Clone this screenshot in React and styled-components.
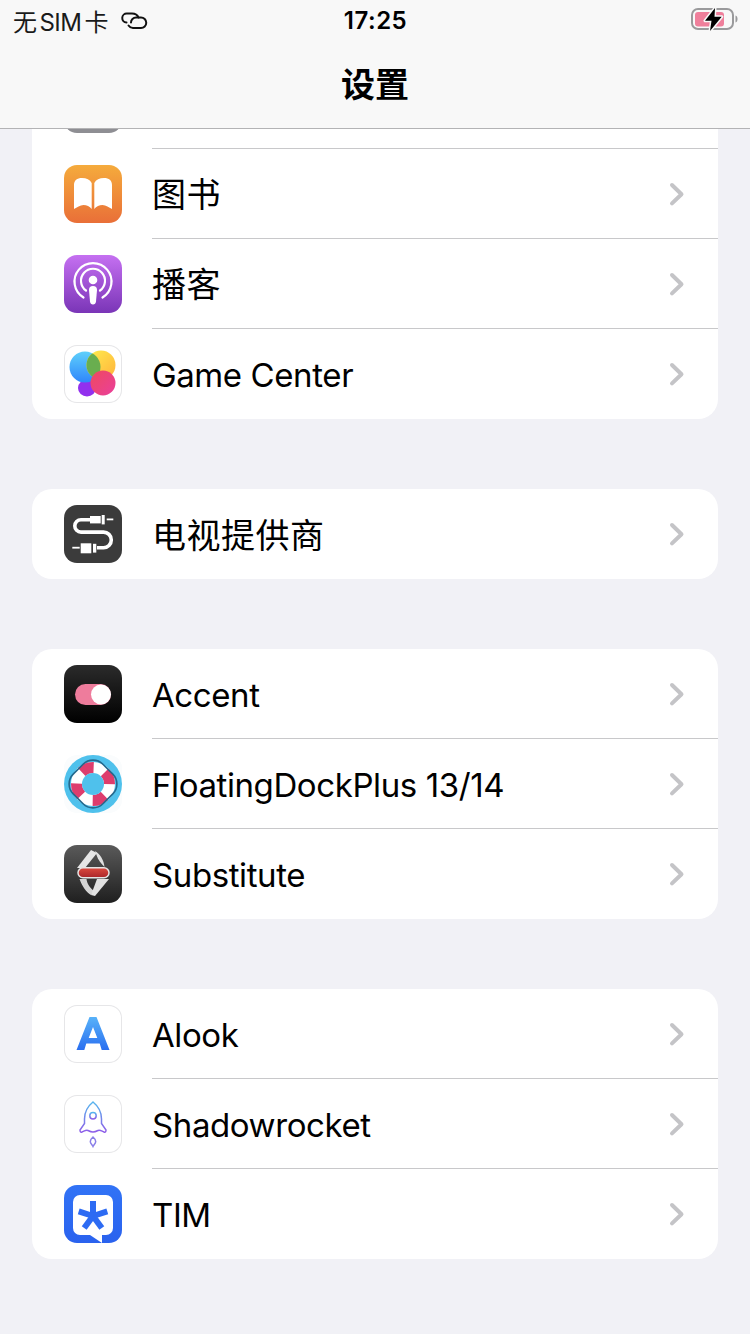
import React from "react";
import styled, { createGlobalStyle } from "styled-components";

const GlobalStyle = createGlobalStyle`
  html, body {
    margin: 0;
    padding: 0;
    background: #f1f1f6;
  }
  body {
    font-family: Inter, "Noto Sans CJK SC", sans-serif;
    color: #000;
  }
`;

const Page = styled.div`
  position: relative;
  width: 750px;
  height: 1334px;
  overflow: hidden;
  padding-top: 59px;
  box-sizing: border-box;
  background: #f1f1f6;
`;

const NavBar = styled.header`
  position: absolute;
  top: 0;
  left: 0;
  right: 0;
  z-index: 2;
  height: 128px;
  background: #f8f8f8;
  border-bottom: 1px solid #b3b3b5;
`;

const StatusBar = styled.div`
  display: flex;
  align-items: center;
  justify-content: space-between;
  height: 40px;
  padding: 0 11px 0 13px;
`;

const Carrier = styled.div`
  display: flex;
  align-items: center;
  gap: 12px;
  width: 200px;
  font-size: 24px;
  letter-spacing: -0.6px;
  word-spacing: -3px;
  color: #1a1a1a;
`;

const Clock = styled.div`
  font-size: 24px;
  font-weight: 600;
  letter-spacing: 0.5px;
  margin-left: -1px;
`;

const Battery = styled.div`
  display: flex;
  justify-content: flex-end;
  width: 200px;
`;

const Title = styled.h1`
  margin: 0;
  padding-top: 1px;
  text-align: center;
  font-size: 34px;
  line-height: 84px;
  height: 84px;
  font-weight: 700;
  font-family: "Noto Sans CJK SC", sans-serif;
`;

const Group = styled.section`
  margin: 0 32px 70px;
  background: #fff;
  border-radius: 20px;
  overflow: hidden;
`;

const Row = styled.div`
  display: flex;
  align-items: center;
  height: 90px;
  padding-left: 32px;
`;

const Tile = styled.div`
  flex: none;
  width: 58px;
  height: 58px;
  margin-right: 30px;
  border-radius: 13px;
  overflow: hidden;
  background: ${(p) => p.$bg || "transparent"};
  box-shadow: ${(p) => (p.$outlined ? "inset 0 0 0 1px #e6e6e8" : "none")};
  svg {
    display: block;
  }
`;

const RowBody = styled.div`
  flex: 1;
  align-self: stretch;
  display: flex;
  align-items: center;
  justify-content: space-between;
  padding-right: 32px;
  border-bottom: ${(p) => (p.$last ? "none" : "1px solid #c8c8ca")};
`;

const Label = styled.span`
  font-size: ${(p) => (p.$cjk ? "34px" : "33px")};
  letter-spacing: ${(p) => (p.$cjk ? "0.5px" : "-0.4px")};
  padding-top: ${(p) => (p.$cjk ? "0" : "2px")};
  padding-bottom: ${(p) => (p.$cjk ? "2px" : "0")};
  font-family: Inter, "Noto Sans CJK SC", sans-serif;
`;

const Art = ({ children }) => (
  <svg width="58" height="58" viewBox="0 0 58 58">
    {children}
  </svg>
);

const Chevron = () => (
  <svg width="20" height="28" viewBox="0 0 20 28">
    <path d="M6 5l9.500 9.200L6 23.400" fill="none" stroke="#c4c4c7" strokeWidth="4" strokeLinecap="round" strokeLinejoin="round" />
  </svg>
);

const LinkGlyph = () => (
  <svg width="28" height="18" viewBox="0 0 28 18">
    <g fill="none" stroke="#111" strokeWidth="2" strokeLinecap="round">
      <path d="M18.500 6.500C17.500 4 15 2.500 12 2.500H7a4.500 4.500 0 0 0-.5 9" />
      <path d="M11 11.500a5 5 0 0 1 5-5h5a5.250 5.250 0 0 1 0 10.500h-8c-2 0-3.500-1-4.500-2.500" />
    </g>
  </svg>
);

const BatteryGlyph = () => (
  <svg width="48" height="26" viewBox="0 0 48 26">
    <rect x="1" y="2" width="41" height="20" rx="6" fill="none" stroke="#9a9a9c" strokeWidth="2" />
    <rect x="4" y="5" width="29" height="14.500" rx="3" fill="#ef7f9b" />
    <path d="M44.500 8.500c1.500.5 2 1.700 2 3.500s-.5 3-2 3.500z" fill="#9a9a9c" />
    <path d="M24 1L14 13.700h6.500L19 24 30.700 9.700H23.500z" fill="#000" stroke="#f8f8f8" strokeWidth="3" strokeLinejoin="round" paintOrder="stroke" />
  </svg>
);

const BooksIcon = () => (
  <Art>
    <defs>
      <linearGradient id="booksBg" x1="0" y1="0" x2="0" y2="1">
        <stop offset="0" stopColor="#f5ab3c" />
        <stop offset="1" stopColor="#e96f38" />
      </linearGradient>
    </defs>
    <rect width="58" height="58" fill="url(#booksBg)" />
    <path d="M10 44V20c0-4.500 3-7 8-7 4.500 0 8 1.800 9.700 5v26c-2-2.500-5-4-8.200-4-3.500 0-6.500 2.500-9.500 4z" fill="#fff" />
    <path d="M48 44V20c0-4.500-3-7-8-7-4.500 0-8 1.800-9.700 5v26c2-2.500 5-4 8.200-4 3.500 0 6.500 2.500 9.500 4z" fill="#fff" />
  </Art>
);

const PodcastIcon = () => (
  <Art>
    <defs>
      <linearGradient id="podcastBg" x1="0" y1="0" x2="0" y2="1">
        <stop offset="0" stopColor="#c570f1" />
        <stop offset="1" stopColor="#7a35b7" />
      </linearGradient>
    </defs>
    <rect width="58" height="58" fill="url(#podcastBg)" />
    <g fill="none" stroke="#fff" strokeWidth="2.200" strokeLinecap="round">
      <path d="M19.500 42.500a18.500 18.500 0 1 1 19 0" />
      <path d="M22 35.500a12 12 0 1 1 14 0" />
    </g>
    <circle cx="29" cy="25" r="4.300" fill="#fff" />
    <path d="M25 35a4 4 0 0 1 8 0l-1 11.500c-.2 2-1.300 3-3 3s-2.800-1-3-3z" fill="#fff" />
  </Art>
);

const GameCenterIcon = () => (
  <Art>
    <defs>
      <linearGradient id="gcBlue" x1="0" y1="0" x2="0" y2="1">
        <stop offset="0" stopColor="#5fd0fb" />
        <stop offset="1" stopColor="#2f86fb" />
      </linearGradient>
      <linearGradient id="gcYellow" x1="0" y1="0" x2="1" y2="1">
        <stop offset="0" stopColor="#ffee4e" />
        <stop offset="1" stopColor="#ffb23c" />
      </linearGradient>
      <linearGradient id="gcPink" x1="0" y1="0" x2="1" y2="1">
        <stop offset="0" stopColor="#ee4a5e" />
        <stop offset="1" stopColor="#ea3f9c" />
      </linearGradient>
      <clipPath id="gcClip">
        <circle cx="37" cy="20" r="14.500" />
      </clipPath>
    </defs>
    <ellipse cx="23" cy="43" rx="9" ry="8.500" fill="#9230ee" />
    <circle cx="21" cy="22" r="15.500" fill="url(#gcBlue)" />
    <circle cx="37" cy="20" r="14.500" fill="url(#gcYellow)" />
    <circle cx="21" cy="22" r="15.500" fill="#69ae4f" clipPath="url(#gcClip)" />
    <circle cx="39" cy="38" r="12.500" fill="url(#gcPink)" />
  </Art>
);

const TvIcon = () => (
  <Art>
    <rect width="58" height="58" fill="#3b3b3b" />
    <path d="M26 14.700H17a6.200 6.200 0 0 0 0 12.400H39.500a7.800 7.800 0 0 1 0 15.600H33" fill="none" stroke="#fff" strokeWidth="3.600" />
    <rect x="26" y="11" width="10.700" height="7.400" fill="#fff" />
    <rect x="37.700" y="10" width="3" height="9.400" fill="#fff" />
    <rect x="42.700" y="13.500" width="6.600" height="1.800" fill="#fff" />
    <rect x="16.700" y="38.300" width="10.600" height="10" fill="#fff" />
    <rect x="29" y="38.800" width="3.300" height="8.800" fill="#fff" />
    <rect x="8.300" y="41.800" width="7.400" height="1.800" fill="#fff" />
  </Art>
);

const AccentIcon = () => (
  <Art>
    <defs>
      <linearGradient id="accentBg" x1="0" y1="0" x2="0" y2="1">
        <stop offset="0" stopColor="#2b2b2b" />
        <stop offset="1" stopColor="#000" />
      </linearGradient>
    </defs>
    <rect width="58" height="58" fill="url(#accentBg)" />
    <rect x="11" y="19" width="36" height="21" rx="10.500" fill="#ee7c9c" />
    <circle cx="37" cy="29.500" r="10" fill="#fff" />
  </Art>
);

const DockIcon = () => (
  <Art>
    <rect width="58" height="58" fill="#fafcfd" />
    <circle cx="29" cy="29" r="29" fill="#4fc1ec" />
    <circle cx="29" cy="29" r="22" fill="#fff" />
    <circle cx="29" cy="29" r="16.500" fill="none" stroke="#dd3d6d" strokeWidth="11" strokeDasharray="13 12.920" transform="rotate(-45 29 29)" />
    <circle cx="29" cy="29" r="11" fill="#4fc1ec" />
    <rect x="8" y="8" width="42" height="42" rx="14" fill="none" stroke="#24698d" strokeWidth="1.600" transform="rotate(45 29 29)" />
  </Art>
);

const SubstituteIcon = () => (
  <Art>
    <defs>
      <linearGradient id="subBg" x1="0" y1="0" x2="0" y2="1">
        <stop offset="0" stopColor="#5a5a5a" />
        <stop offset="1" stopColor="#1f1f1f" />
      </linearGradient>
      <linearGradient id="subBar" x1="0" y1="0" x2="0" y2="1">
        <stop offset="0" stopColor="#dc4a3e" />
        <stop offset="1" stopColor="#a9262a" />
      </linearGradient>
    </defs>
    <rect width="58" height="58" fill="url(#subBg)" />
    <path d="M27 5L13 23h8L33 8z" fill="#e6e6e6" />
    <path d="M31 6c5 3 9 9 9.500 16-3.500-4-6.500-7-8-12z" fill="#e0e0e0" />
    <path d="M15.500 34c2.500 7 6.500 13 11.500 16l3-4c-5-4-7-8-7.500-12z" fill="#d4d4d4" />
    <path d="M33 34h12L31 51l-4-1z" fill="#e2e2e2" />
    <rect x="14" y="22.700" width="31" height="10" rx="5" fill="url(#subBar)" stroke="#e4e4e4" strokeWidth="1.500" />
  </Art>
);

const AlookIcon = () => (
  <Art>
    <defs>
      <linearGradient id="alookFill" x1="0" y1="0" x2="0" y2="1">
        <stop offset="0" stopColor="#58b2f9" />
        <stop offset="1" stopColor="#2a6ff0" />
      </linearGradient>
    </defs>
    <path fillRule="evenodd" d="M25.500 12h7L45.500 45h-7.800l-2-6.500H22.300l-2 6.500h-7.800zM29 22l-4.300 11h8.600z" fill="url(#alookFill)" />
  </Art>
);

const RocketIcon = () => (
  <Art>
    <defs>
      <linearGradient id="rocketStroke" x1="0" y1="0" x2="0" y2="1">
        <stop offset="0" stopColor="#55b6ee" />
        <stop offset="1" stopColor="#8f5fe8" />
      </linearGradient>
    </defs>
    <g fill="none" stroke="url(#rocketStroke)" strokeWidth="1.500">
      <path d="M29 7c-5 4-8.500 10-8.500 17v4.500L16 35c0 1.500.5 2.500 2 2 2.500-1 4-2.500 6-1.500 2 1 3.500 1.500 5 1.500s3-.5 5-1.500 3.500.5 6 1.500c1.500.5 2-.5 2-2l-4.500-6.500V24C37.500 17 34 11 29 7z" />
      <circle cx="29" cy="20.700" r="3.200" />
    </g>
    <path d="M29 42c1.800 1.500 2.700 3 2.700 4.500 0 2-1.700 3-2.700 5-1-2-2.700-3-2.700-5 0-1.500.9-3 2.700-4.500z" fill="none" stroke="#8a7fe8" strokeWidth="1.500" />
  </Art>
);

const TimIcon = () => (
  <Art>
    <defs>
      <linearGradient id="timBg" x1="0" y1="0" x2="0" y2="1">
        <stop offset="0" stopColor="#3173f6" />
        <stop offset="1" stopColor="#2a62ee" />
      </linearGradient>
    </defs>
    <rect width="58" height="58" fill="url(#timBg)" />
    <path d="M16 10h26a7 7 0 0 1 7 7v26a7 7 0 0 1-7 7h-4v8L26 50H16a7 7 0 0 1-7-7V17a7 7 0 0 1 7-7z" fill="#fff" />
    <g stroke="#2d6bf3" strokeWidth="6">
      <path d="M29 31V16" />
      <path d="M29 31l14.300-4.600" />
      <path d="M29 31l8.800 12.100" />
      <path d="M29 31l-8.800 12.100" />
      <path d="M29 31l-14.300-4.600" />
    </g>
  </Art>
);

const groups = [
  [
    { id: "hidden", bg: "#8e8e93" },
    { id: "books", label: "图书", cjk: true, Icon: BooksIcon },
    { id: "podcast", label: "播客", cjk: true, Icon: PodcastIcon },
    { id: "gc", label: "Game Center", Icon: GameCenterIcon, outlined: true, bg: "#fff" },
  ],
  [{ id: "tv", label: "电视提供商", cjk: true, Icon: TvIcon }],
  [
    { id: "accent", label: "Accent", Icon: AccentIcon },
    { id: "dock", label: "FloatingDockPlus 13/14", Icon: DockIcon },
    { id: "sub", label: "Substitute", Icon: SubstituteIcon },
  ],
  [
    { id: "alook", label: "Alook", Icon: AlookIcon, outlined: true },
    { id: "rocket", label: "Shadowrocket", Icon: RocketIcon, outlined: true },
    { id: "tim", label: "TIM", Icon: TimIcon },
  ],
];

export default function App() {
  return (
    <>
      <GlobalStyle />
      <Page>
        <NavBar>
          <StatusBar>
            <Carrier>
              <span>无 SIM 卡</span>
              <LinkGlyph />
            </Carrier>
            <Clock>17:25</Clock>
            <Battery>
              <BatteryGlyph />
            </Battery>
          </StatusBar>
          <Title>设置</Title>
        </NavBar>
        {groups.map((rows, i) => (
          <Group key={i}>
            {rows.map((row, j) => (
              <Row key={row.id}>
                <Tile $bg={row.bg} $outlined={row.outlined}>
                  {row.Icon && <row.Icon />}
                </Tile>
                <RowBody $last={j === rows.length - 1}>
                  <Label $cjk={row.cjk}>{row.label}</Label>
                  <Chevron />
                </RowBody>
              </Row>
            ))}
          </Group>
        ))}
      </Page>
    </>
  );
}
